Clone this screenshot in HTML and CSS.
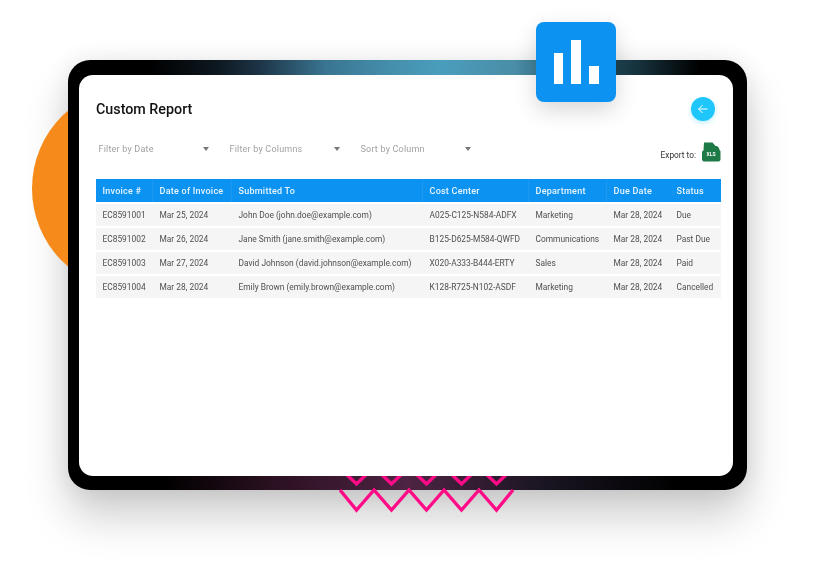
FILE: index.html
```html
<!DOCTYPE html>
<html lang="en">
<head>
<meta charset="utf-8">
<title>Custom Report</title>
<link rel="stylesheet" href="styles.css">
</head>
<body>
<main class="stage">
  <div class="circle"></div>
  <section class="device">
    <svg class="zigzag" width="176" height="40" viewBox="0 0 176 40" aria-hidden="true">
      <path d="M1 -8 L17.5 8 L34 -8 M36 -8 L52.5 8 L69 -8 M71 -8 L87.5 8 L104 -8 M106 -8 L122.5 8 L139 -8 M141 -8 L157.5 8 L174 -8" fill="none" stroke="#ff0a87" stroke-width="3.4"/>
      <path d="M1 14 L17.5 34 L35 14 L52.5 34 L70 14 L87.5 34 L105 14 L122.5 34 L140 14 L157.5 34 L174 14" fill="none" stroke="#ff0a87" stroke-width="3.4"/>
    </svg>
    <div class="screen">
      <header class="head">
        <h1 class="title">Custom Report</h1>
        <button class="back" type="button" aria-label="Back">
          <svg width="12" height="12" viewBox="0 0 12 12"><path d="M10.5 6 H1.8 M5.6 2 L1.6 6 L5.6 10" fill="none" stroke="#fff" stroke-width="1"/></svg>
        </button>
      </header>
      <div class="tools">
        <div class="filters">
          <div class="select"><span>Filter by Date</span><i class="caret"></i></div>
          <div class="select"><span>Filter by Columns</span><i class="caret"></i></div>
          <div class="select"><span>Sort by Column</span><i class="caret"></i></div>
        </div>
        <div class="export">
          <span>Export to:</span>
          <svg width="20" height="20" viewBox="0 0 20 20">
            <path d="M3 0.5 H11.5 L14.5 4 L16 4 L18 6 L18.5 8 L19.5 9 V18 L18 19.5 H2.5 L1 18 V9.5 L2.5 8.5 Z" fill="#1d7a46"/>
            <text x="10" y="14" text-anchor="middle" class="xls">XLS</text>
          </svg>
        </div>
      </div>
      <table class="report">
        <colgroup>
          <col class="c1"><col class="c2"><col class="c3"><col class="c4"><col class="c5"><col class="c6"><col class="c7">
        </colgroup>
        <thead>
          <tr><th>Invoice #</th><th>Date of Invoice</th><th>Submitted To</th><th>Cost Center</th><th>Department</th><th>Due Date</th><th>Status</th></tr>
        </thead>
        <tbody>
          <tr><td>EC8591001</td><td>Mar 25, 2024</td><td>John Doe (john.doe@example.com)</td><td>A025-C125-N584-ADFX</td><td>Marketing</td><td>Mar 28, 2024</td><td>Due</td></tr>
          <tr><td>EC8591002</td><td>Mar 26, 2024</td><td>Jane Smith (jane.smith@example.com)</td><td>B125-D625-M584-QWFD</td><td>Communications</td><td>Mar 28, 2024</td><td>Past Due</td></tr>
          <tr><td>EC8591003</td><td>Mar 27, 2024</td><td>David Johnson (david.johnson@example.com)</td><td>X020-A333-B444-ERTY</td><td>Sales</td><td>Mar 28, 2024</td><td>Paid</td></tr>
          <tr><td>EC8591004</td><td>Mar 28, 2024</td><td>Emily Brown (emily.brown@example.com)</td><td>K128-R725-N102-ASDF</td><td>Marketing</td><td>Mar 28, 2024</td><td>Cancelled</td></tr>
        </tbody>
      </table>
    </div>
  </section>
  <div class="tile">
    <span class="bar bar-a"></span><span class="bar bar-b"></span><span class="bar bar-c"></span>
  </div>
</main>
</body>
</html>
```

FILE: styles.css
```css
* { box-sizing: border-box; }
html { background: #fff; }
body { margin: 0; font-family: Roboto, "Liberation Sans", sans-serif; overflow: hidden; }

.stage {
  position: relative;
  width: 816px;
  height: 581px;
  padding: 60px 69px 0 68px;
}

.circle {
  position: absolute;
  left: 32px;
  top: 86px;
  width: 205px;
  height: 205px;
  border-radius: 50%;
  background: #f68b1b;
}

.device {
  position: relative;
  width: 679px;
  height: 430px;
  padding: 15px 14px 14px 11px;
  border-radius: 22px;
  background-color: #000;
  background-image:
    linear-gradient(90deg, #000 12%, #0d1820 22%, #1c3345 28%, #3a7592 38%, #4590ad 48%, #4a9dbd 55%, #4a8da6 66%, #1d4250 81%, #000 93%),
    linear-gradient(90deg, #000 14%, #2a1020 30%, #4d2443 50%, #1a1522 70%, #000 90%);
  background-size: 100% 15px, 100% 14px;
  background-position: top, bottom;
  background-repeat: no-repeat;
}

.device::before {
  content: "";
  position: absolute;
  inset: 0;
  z-index: -1;
  border-radius: 22px;
  box-shadow: 0 26px 44px rgba(0, 0, 0, .2), 0 0 24px rgba(0, 0, 0, .08);
}

.zigzag {
  position: absolute;
  left: 271px;
  top: 416px;
  overflow: visible;
}

.screen {
  position: relative;
  height: 100%;
  padding: 22px 12px 0 17px;
  border-radius: 14px;
  background: #fff;
  filter: blur(.45px);
}

.head {
  display: flex;
  align-items: center;
  justify-content: space-between;
  height: 24px;
  padding-right: 6px;
}

.title {
  margin: 0;
  font-size: 14.3px;
  font-weight: 500;
  line-height: 22px;
  color: #111;
}

.back {
  width: 24px;
  height: 24px;
  padding: 0;
  border: 0;
  border-radius: 50%;
  display: flex;
  align-items: center;
  justify-content: center;
  background: #1ec6fc;
  box-shadow: 0 2px 5px rgba(30, 198, 252, .3);
}

.tools {
  display: flex;
  justify-content: space-between;
  align-items: flex-start;
  height: 48px;
  margin-top: 10px;
}

.filters {
  display: flex;
  gap: 16px;
  padding-top: 11px;
}

.select {
  display: flex;
  align-items: center;
  justify-content: space-between;
  width: 115px;
  height: 14px;
  padding: 0 2px 0 2.5px;
  font-size: 9px;
  letter-spacing: .2px;
  color: #a2a2a2;
}

.caret {
  width: 0;
  height: 0;
  border-left: 3.5px solid transparent;
  border-right: 3.5px solid transparent;
  border-top: 4px solid #777;
}

.export {
  display: flex;
  align-items: center;
  gap: 5px;
  margin-top: 11px;
  font-size: 8.3px;
  color: #333;
}
.export span { margin-top: 5px; }
.export svg { display: block; }
.xls { font: 700 5px Roboto, sans-serif; fill: #fff; }

.report {
  width: 625px;
  table-layout: fixed;
  border-collapse: separate;
  border-spacing: 0 2px;
  margin-top: -2px;
}
.c1 { width: 57px; } .c2 { width: 79px; } .c3 { width: 191px; } .c4 { width: 106px; }
.c5 { width: 78px; } .c6 { width: 63px; } .c7 { width: 51px; }

.report th {
  height: 23px;
  padding: 0 0 0 6.5px;
  text-align: left;
  font-size: 9px;
  font-weight: 500;
  letter-spacing: .25px;
  color: #e8f5ff;
  background: #0c92f0;
  border-right: 1px solid rgba(255, 255, 255, .07);
}
.report th:nth-child(n+6) { border-right: 0; }

.report td {
  height: 22px;
  padding: 0 0 0 6.5px;
  font-size: 8.4px;
  white-space: nowrap;
  color: #505050;
  background: #f5f5f5;
}

.tile {
  position: absolute;
  left: 536px;
  top: 22px;
  width: 80px;
  height: 80px;
  padding: 18px 17.5px;
  display: flex;
  align-items: flex-end;
  justify-content: space-between;
  border-radius: 8px;
  background: #0c92f0;
  box-shadow: 0 8px 22px rgba(0, 0, 0, .16);
}

.bar { width: 9.5px; background: #fff; }
.bar-a { height: 31px; }
.bar-b { height: 44px; }
.bar-c { height: 18px; }
```
